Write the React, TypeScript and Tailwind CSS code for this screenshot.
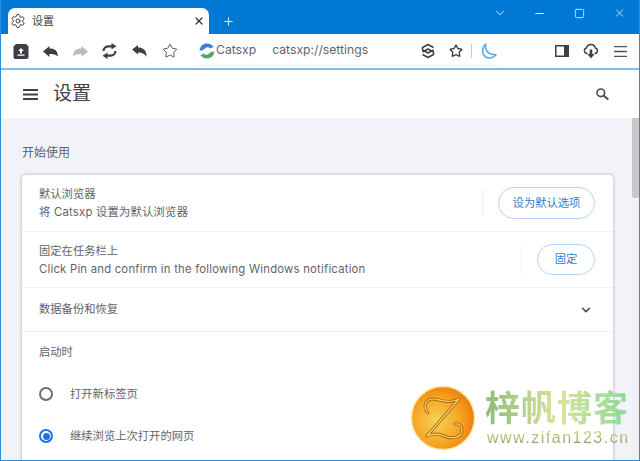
import { ChevronDown, Minus, Plus, Settings, Square, Star, X } from 'lucide-react';

const CJK = 'font-["Inter","Noto_Sans_CJK_SC",sans-serif]';

function BoxIcon() {
  return (
    <svg width="16" height="15" viewBox="0 0 16 15">
      <path d="M3 0h10l2.500 2.500V13a2 2 0 0 1-2 2h-11a2 2 0 0 1-2-2V2.500z" fill="#3c3f44" />
      <path d="M8 4l3 3H9v2.500H7V7H5zM4.500 10.500h7v1.200h-7z" fill="#fff" />
    </svg>
  );
}

function ArrowIcon({ color, flip }: { color: string; flip?: boolean }) {
  return (
    <svg width="15" height="11" viewBox="0 0 15 11" className={flip ? '-scale-x-100' : ''}>
      <path d="M0 5.500L6.500 0V2.500C11 2.500 14.500 3.500 15 10.500 13 8.500 10 8 6.500 8V11z" fill={color} />
    </svg>
  );
}

function ReloadIcon() {
  return (
    <svg width="15" height="16" viewBox="0 0 15 16" fill="none">
      <path d="M1.500 8C1.500 5 4 3.300 6.500 3.300H10" stroke="#3c3f44" strokeWidth="2.200" />
      <path d="M9.500 0l5 3.300-5 3.300z" fill="#3c3f44" />
      <path d="M13.500 8C13.500 11 11 12.700 8.500 12.700H5" stroke="#3c3f44" strokeWidth="2.200" />
      <path d="M5.500 16l-5-3.300 5-3.300z" fill="#3c3f44" />
    </svg>
  );
}

function UndoIcon() {
  return (
    <svg width="15" height="12" viewBox="0 0 15 12">
      <path d="M0 4.500L6 0V2.500C11 2.500 14.800 5 14.500 12 13 9 10.500 7.500 6 7.500V9.500z" fill="#3c3f44" />
    </svg>
  );
}

function BrandIcon() {
  return (
    <svg width="16" height="16" viewBox="0 0 16 16" fill="none">
      <path d="M0.500 7.500C1 3 4.500 0.500 8 0.500c2.500 0 4.800 1 6.500 3.200L11.500 5.500C9.500 3.800 7.500 4 6 5.500 4.500 7 2.800 7.800 0.500 7.500z" fill="#3f7fd0" />
      <path d="M15.500 8.500C15 13 11.500 15.500 8 15.500c-2.500 0-4.800-1-6.500-3.200L4.500 10.500C6.500 12.200 8.500 12 10 10.500 11.500 9 13.200 8.200 15.500 8.500z" fill="#5aa469" />
    </svg>
  );
}

function LayersIcon() {
  return (
    <svg width="16" height="16" viewBox="0 0 16 16" fill="none" stroke="#3c3f44" strokeWidth="1.500" strokeLinejoin="round">
      <path d="M13.500 7L8 10 2.500 7V4.500L8 1.500l5.500 3" />
      <path d="M2.500 9L8 6l5.500 3v2.500L8 14.500l-5.500-3" />
    </svg>
  );
}

function MoonIcon() {
  return (
    <svg width="16" height="16" viewBox="0 0 16 16" fill="none">
      <path d="M5 1C3.500 6 6 12 15 11.800 12.800 14.800 8.500 15.800 5.300 14.200 0.800 12 0 5 5 1z" stroke="#5aa9ee" strokeWidth="1.600" strokeLinejoin="round" />
    </svg>
  );
}

function SidebarIcon() {
  return (
    <svg width="14" height="12" viewBox="0 0 14 12">
      <rect x="0.750" y="0.750" width="12.500" height="10.500" fill="#fff" stroke="#3c3f44" strokeWidth="1.500" />
      <rect x="9" y="1" width="4" height="10" fill="#3c3f44" />
    </svg>
  );
}

function CloudIcon() {
  return (
    <svg width="16" height="16" viewBox="0 0 16 16" fill="none">
      <path d="M4.500 10.500H4A2.800 2.800 0 0 1 3.500 5 4.500 4.500 0 0 1 12.300 5 2.800 2.800 0 0 1 12 10.500h-.500" stroke="#3c3f44" strokeWidth="1.400" />
      <path d="M6.700 6.500h2.600V11H11.500L8 15.500 4.500 11h2.200z" fill="#3c3f44" />
    </svg>
  );
}

function BarsIcon({ width, height, color, stroke }: { width: number; height: number; color: string; stroke: number }) {
  return (
    <svg width={width} height={height} viewBox={`0 0 ${width} ${height}`} stroke={color} strokeWidth={stroke}>
      <path d={`M0 ${stroke / 2}H${width}M0 ${height / 2}H${width}M0 ${height - stroke / 2}H${width}`} />
    </svg>
  );
}

function SearchIcon() {
  return (
    <svg width="13" height="12" viewBox="0 0 13 12" fill="none" stroke="#4a4a4a">
      <circle cx="4.800" cy="4.800" r="3.800" strokeWidth="1.600" />
      <path d="M7.500 7.500L12.300 11.500" strokeWidth="2" />
    </svg>
  );
}

function ZifanLogo() {
  return (
    <svg width="66" height="66" viewBox="0 0 66 66" fill="none">
      <defs>
        <radialGradient id="coin" cx="0.400" cy="0.550" r="0.600">
          <stop offset="0" stopColor="#f7d25a" />
          <stop offset="0.600" stopColor="#f6a723" />
          <stop offset="1" stopColor="#ee7d0c" />
        </radialGradient>
      </defs>
      <circle cx="33" cy="33" r="31.500" fill="url(#coin)" stroke="#f3e6a0" strokeWidth="1.500" />
      <path d="M18 28C12 22 16 14 23 14c6 0 12 4 20 2 2-.500 4-1 6-2L17 51c8-4 14-1 20 1 7 2 15 0 15-7 0-4-3-7-7-6" stroke="#a9650d" strokeWidth="3" strokeLinecap="round" strokeLinejoin="round" />
      <path d="M18 28C12 22 16 14 23 14c6 0 12 4 20 2 2-.500 4-1 6-2L17 51c8-4 14-1 20 1 7 2 15 0 15-7 0-4-3-7-7-6" stroke="#fbd76a" strokeWidth="1.200" strokeLinecap="round" strokeLinejoin="round" />
    </svg>
  );
}

function ActionRow({ title, sub, action, height, buttonClass }: { title: string; sub: string; action: string; height: string; buttonClass: string }) {
  return (
    <div className={`flex items-center border-b border-[#f0f0f0] pl-[17px] pr-[18px] ${height}`}>
      <div className="flex-1 text-[11.300px] leading-[18px] text-[#5f6368]">
        <div>{title}</div>
        <div className="tracking-[0.230px]">{sub}</div>
      </div>
      <div className="mr-[15px] h-[28px] border-l border-[#efefef]" />
      <button className={`flex items-center justify-center rounded-full border border-[#b5d6f5] text-[11.300px] text-[#2f7fd1] ${buttonClass}`}>
        {action}
      </button>
    </div>
  );
}

function RadioRow({ label, checked }: { label: string; checked?: boolean }) {
  return (
    <div className="flex h-[42px] items-center pl-[17px]">
      <span className={`flex h-[14px] w-[14px] items-center justify-center rounded-full border-2 ${checked ? 'border-[#1a73e8]' : 'border-[#6e6e6e]'}`}>
        {checked && <span className="h-[7px] w-[7px] rounded-full bg-[#1a73e8]" />}
      </span>
      <span className="ml-[17px] text-[11.300px] text-[#5f6368]">{label}</span>
    </div>
  );
}

export default function App() {
  return (
    <div className={`relative flex h-[461px] w-[640px] flex-col overflow-hidden border-x border-b border-[#2a8be2] ${CJK}`}>
      {/* title bar */}
      <div className="-mx-px flex h-[34px] shrink-0 items-end bg-[#0078d4] pl-[8px]">
        <div className="flex h-[26px] w-[201px] items-center rounded-t-[7px] bg-white pl-[2px] pr-[4px]">
          <Settings size={16} strokeWidth={1.500} className="text-[#3c3f44]" />
          <span className="ml-[6px] flex-1 text-[11px] text-[#444]">设置</span>
          <X size={12} strokeWidth={2.500} className="text-[#333]" />
        </div>
        <div className="mb-[6px] ml-[12px] flex w-[14px] justify-center">
          <Plus size={13} className="text-[#cfe6f8]" />
        </div>
        <div className="mb-[14px] ml-auto flex items-center text-[#e3f1fb]">
          <ChevronDown size={14} strokeWidth={1.500} />
          <div className="ml-[26px] flex w-[13px] justify-center"><Minus size={13} strokeWidth={1.800} /></div>
          <div className="ml-[27px] flex w-[13px] justify-center"><Square size={11} strokeWidth={1.800} /></div>
          <div className="ml-[27px] mr-[14px] flex w-[13px] justify-center"><X size={14} strokeWidth={1.500} /></div>
        </div>
      </div>

      {/* toolbar */}
      <div className="flex h-[36px] shrink-0 items-center border-b-2 border-[#80bbea] bg-white pl-[12px]">
        <BoxIcon />
        <div className="ml-[14px] flex"><ArrowIcon color="#3c3f44" /></div>
        <div className="ml-[15px] flex"><ArrowIcon color="#b9bbbd" flip /></div>
        <div className="ml-[14px] flex"><ReloadIcon /></div>
        <div className="ml-[15px] flex"><UndoIcon /></div>
        <Star size={16} strokeWidth={1.300} className="ml-[15px] text-[#3c3f44]" />
        <div className="ml-[19px] flex h-[30px] w-[301px] items-center border-b border-[#f0f0f0] pl-[2px] pr-[1px] text-[12.200px] text-[#5f6368]">
          <BrandIcon />
          <span className="ml-[1px]">Catsxp</span>
          <span className="ml-[16px]">catsxp://settings</span>
          <div className="ml-auto"><LayersIcon /></div>
          <Star size={14} strokeWidth={2.300} className="ml-[13px] text-[#3c3f44]" />
          <div className="ml-[8px] h-[14px] border-l border-[#c8c8c8]" />
          <div className="ml-[9px] flex"><MoonIcon /></div>
        </div>
        <div className="ml-[57px] flex"><SidebarIcon /></div>
        <div className="ml-[14px] flex"><CloudIcon /></div>
        <div className="ml-[15px] flex"><BarsIcon width={13} height={11} color="#555" stroke={1.300} /></div>
      </div>

      {/* settings header */}
      <div className="flex h-[48px] shrink-0 items-center bg-white pl-[22px] pr-[30px]">
        <BarsIcon width={15} height={11} color="#3c3f44" stroke={2} />
        <span className="ml-[15px] flex-1 text-[19px] text-[#3f4248]">设置</span>
        <SearchIcon />
      </div>

      {/* content */}
      <div className="flex min-h-0 flex-1 bg-[#f1f3f8]">
        <div className="min-w-0 flex-1 pl-[21px] pr-[19px]">
          <div className="flex h-[57px] items-center pt-[12px] text-[12px] text-[#5f6368]">开始使用</div>
          <div className="h-[300px] rounded-[4px] bg-white shadow-[0_0_3px_1px_rgba(0,0,0,0.18)]">
            <ActionRow
              title="默认浏览器"
              sub="将 Catsxp 设置为默认浏览器"
              action="设为默认选项"
              height="h-[57px]"
              buttonClass="h-[32px] w-[97px]"
            />
            <ActionRow
              title="固定在任务栏上"
              sub="Click Pin and confirm in the following Windows notification"
              action="固定"
              height="h-[56px]"
              buttonClass="h-[31px] w-[58px]"
            />
            <div className="flex h-[44px] items-center justify-between border-b border-[#f0f0f0] pl-[17px] pr-[20px] text-[11.300px] text-[#5f6368]">
              <span>数据备份和恢复</span>
              <ChevronDown size={14} strokeWidth={2.500} className="text-[#3c3f44]" />
            </div>
            <div className="flex h-[41px] items-center pl-[17px] text-[11.300px] text-[#5f6368]">启动时</div>
            <RadioRow label="打开新标签页" />
            <RadioRow label="继续浏览上次打开的网页" checked />
          </div>
        </div>
        <div className="w-[7px] shrink-0 bg-[#f1f1f4]">
          <div className="h-[80px] w-[7px] rounded-b-[2px] bg-[#c8c9c5]" />
        </div>
      </div>

      {/* watermark */}
      <div className="absolute left-[409px] top-[385px] flex items-center">
        <ZifanLogo />
        <div className="mb-[2px] ml-[9px] flex flex-col">
          <span className="bg-linear-to-r from-[#8fbb78] via-[#d9e39a] to-[#8ad89a] bg-clip-text text-[35px] font-bold leading-[40px] tracking-[1px] text-transparent">
            梓帆博客
          </span>
          <span className="mt-[1px] bg-linear-to-b from-[#e4d77a] to-[#7f9a6a] bg-clip-text pl-[2px] font-['Liberation_Sans',sans-serif] text-[16px] leading-[17px] tracking-[1.500px] text-transparent">
            www.zifan123.cn
          </span>
        </div>
      </div>
    </div>
  );
}
